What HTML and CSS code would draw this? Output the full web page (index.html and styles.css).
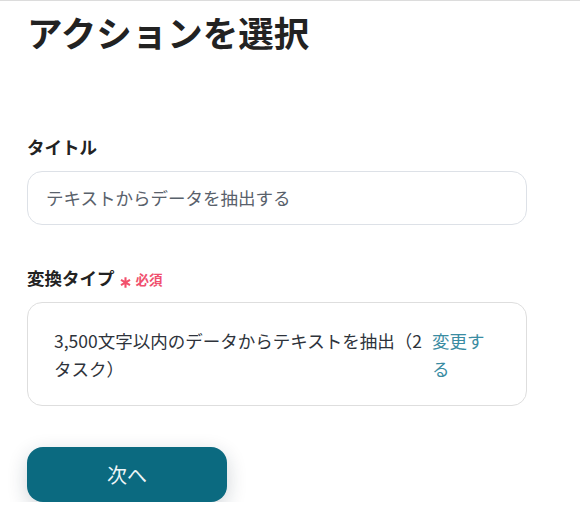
FILE: index.html
```html
<!DOCTYPE html>
<html lang="ja">
<head>
<meta charset="utf-8">
<title>アクションを選択</title>
<link rel="stylesheet" href="styles.css">
</head>
<body>
<main class="page">
  <h1 class="page-title">アクションを選択</h1>

  <section class="field field-title">
    <div class="field-label">タイトル</div>
    <div class="text-input">テキストからデータを抽出する</div>
  </section>

  <section class="field field-type">
    <div class="field-label">変換タイプ
      <span class="required">
        <svg class="req-star" width="11" height="11" viewBox="0 0 10 10" aria-hidden="true">
          <path d="M5 0.3V9.7M0.9 2.65L9.1 7.35M9.1 2.65L0.9 7.35" stroke="#f2506c" stroke-width="1.9" stroke-linecap="butt"/>
        </svg>
        <span class="req-text">必須</span>
      </span>
    </div>
    <div class="select-box">
      <div class="select-text">3,500文字以内のデータからテキストを抽出（2タスク）</div>
      <a class="select-change" href="#">変更する</a>
    </div>
  </section>

  <button class="next-btn" type="button">次へ</button>
</main>
</body>
</html>
```

FILE: styles.css
```css
* {
  box-sizing: border-box;
}

html, body {
  margin: 0;
  padding: 0;
  background: #ffffff;
}

body {
  border-top: 1px solid #dcdcdc;
  font-family: "Noto Sans CJK JP", "Noto Sans", sans-serif;
  color: #222222;
}

.page {
  padding: 7px 0 0 27px;
  width: 527px;
  display: flex;
  flex-direction: column;
}

.page-title {
  margin: 0;
  font-size: 35.5px;
  line-height: 48px;
  font-weight: 700;
  color: #222222;
  letter-spacing: 0;
}

.field {
  display: flex;
  flex-direction: column;
  gap: 12px;
}

.field-title {
  margin-top: 79px;
}

.field-type {
  margin-top: 41px;
}

.field-label {
  font-size: 17.5px;
  line-height: 24px;
  font-weight: 700;
  color: #222222;
  display: flex;
  align-items: center;
  height: 24px;
}

.required {
  display: inline-flex;
  align-items: center;
  margin-left: 5px;
  color: #f0506e;
}

.req-star {
  margin-top: 9px;
  margin-right: 5px;
}

.req-text {
  font-size: 13.5px;
  font-weight: 700;
  line-height: 24px;
  margin-top: 1px;
}

.text-input {
  width: 500px;
  height: 54px;
  border: 1px solid #dde1e7;
  border-radius: 15px;
  padding: 14px 18px;
  font-size: 17.5px;
  line-height: 24px;
  color: #59616b;
}

.select-box {
  width: 500px;
  border: 1px solid #dedede;
  border-radius: 15px;
  padding: 24px 38px 22px 26px;
  display: grid;
  grid-template-columns: 1fr 56px;
  column-gap: 5px;
  font-size: 17.5px;
  line-height: 28px;
}

.select-text {
  color: #2e333b;
}

.select-change {
  color: #3a8ca2;
  text-decoration: none;
}

.next-btn {
  margin-top: 41px;
  width: 200px;
  height: 55px;
  border: none;
  border-radius: 16px;
  background: #0b6a80;
  color: #eef6f8;
  font-family: "Noto Sans CJK JP", "Noto Sans", sans-serif;
  font-size: 20px;
  font-weight: 400;
  box-shadow: 0 6px 20px rgba(20, 40, 60, 0.2);
  cursor: pointer;
  padding: 0;
}
```
